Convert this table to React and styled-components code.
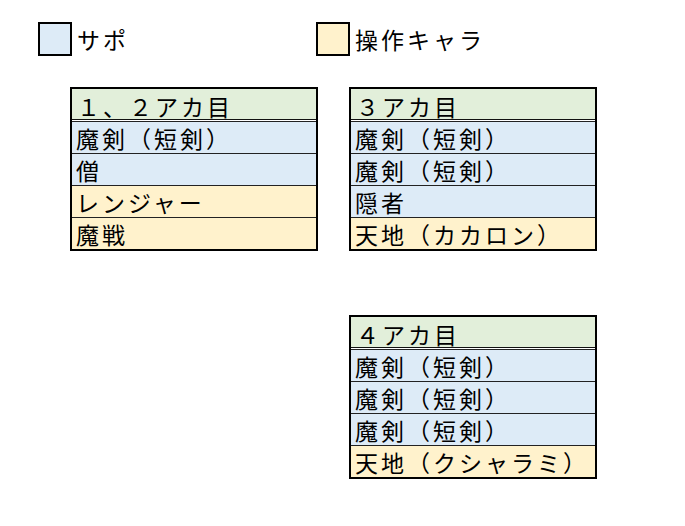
import React from "react";
import styled, { createGlobalStyle } from "styled-components";

const GlobalStyle = createGlobalStyle`
  body {
    margin: 0;
    background: #fff;
    font-family: "Noto Sans CJK JP", "Noto Sans", sans-serif;
    color: #000;
  }
`;

const BLUE = "#ddebf7";
const ORANGE = "#fff2cc";
const GREEN = "#e2efda";

const tables = [
  {
    title: "１、２アカ目",
    rows: [
      { text: "魔剣（短剣）", kind: "sup" },
      { text: "僧", kind: "sup" },
      { text: "レンジャー", kind: "op" },
      { text: "魔戦", kind: "op" },
    ],
  },
  {
    title: "３アカ目",
    rows: [
      { text: "魔剣（短剣）", kind: "sup" },
      { text: "魔剣（短剣）", kind: "sup" },
      { text: "隠者", kind: "sup" },
      { text: "天地（カカロン）", kind: "op" },
    ],
  },
  {
    title: "４アカ目",
    rows: [
      { text: "魔剣（短剣）", kind: "sup" },
      { text: "魔剣（短剣）", kind: "sup" },
      { text: "魔剣（短剣）", kind: "sup" },
      { text: "天地（クシャラミ）", kind: "op" },
    ],
    col: 2,
  },
];

const App = () => {
  return (
    <Page>
      <GlobalStyle />
      <Legend>
        <LegendItem>
          <Swatch $bg={BLUE} />
          <LegendLabel>サポ</LegendLabel>
        </LegendItem>
        <LegendItem>
          <Swatch $bg={ORANGE} />
          <LegendLabel>操作キャラ</LegendLabel>
        </LegendItem>
      </Legend>
      <Tables>
        {tables.map((t) => (
          <Table key={t.title} $col={t.col}>
            <Header>{t.title}</Header>
            {t.rows.map((r, i) => (
              <Row key={i} $bg={r.kind === "sup" ? BLUE : ORANGE}>
                {r.text}
              </Row>
            ))}
          </Table>
        ))}
      </Tables>
    </Page>
  );
};

export default App;

const Page = styled.div`
  padding: 22px 0 0 38px;
`;

const Legend = styled.div`
  display: grid;
  grid-template-columns: 278px auto;
`;

const LegendItem = styled.div`
  display: flex;
  align-items: center;
  gap: 5px;
`;

const Swatch = styled.div`
  width: 30px;
  height: 30px;
  border: 2px solid #000;
  background: ${(p) => p.$bg};
`;

const LegendLabel = styled.span`
  font-size: 23px;
  letter-spacing: 3px;
  line-height: 34px;
`;

const Tables = styled.div`
  display: grid;
  grid-template-columns: 248px 248px;
  column-gap: 31px;
  row-gap: 64px;
  margin: 31px 0 0 32px;
`;

const Table = styled.div`
  grid-column: ${(p) => p.$col || "auto"};
  border: 2px solid #000;
  background: #fff;
  font-size: 23px;
  letter-spacing: 3px;
`;

const Header = styled.div`
  box-sizing: border-box;
  height: 31px;
  padding: 4px 0 0 5px;
  line-height: 27px;
  background: ${GREEN};
  border-bottom: 1px solid #111;
  margin-bottom: 1px;
  white-space: nowrap;
`;

const Row = styled.div`
  box-sizing: border-box;
  height: 32px;
  padding: 2px 0 0 4px;
  line-height: 29px;
  background: ${(p) => p.$bg};
  border-top: 1px solid #222;
  white-space: nowrap;
`;
